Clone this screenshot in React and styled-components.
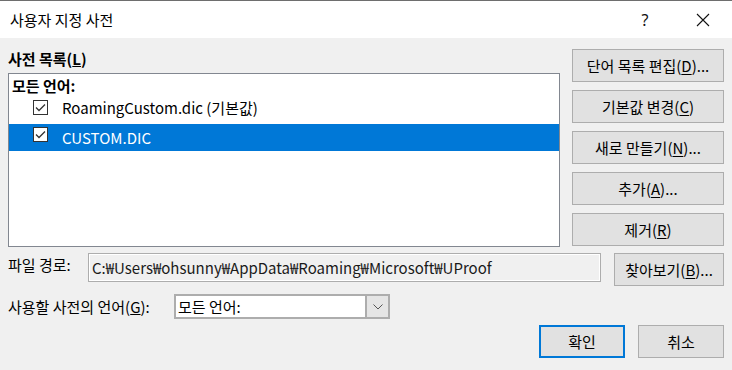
import React from 'react';
import styled, { createGlobalStyle } from 'styled-components';

const GlobalStyle = createGlobalStyle`
  html, body {
    margin: 0;
    padding: 0;
    background: #f0f0f0;
  }
  body {
    font-family: "Noto Sans CJK KR", "Noto Sans", sans-serif;
    font-size: 15px;
    color: #000;
  }
`;

const Dialog = styled.div`
  width: 732px;
  height: 370px;
  display: flex;
  flex-direction: column;
  background: #f0f0f0;
  overflow: hidden;
`;

/* Title bar */
const TitleBar = styled.div`
  height: 37px;
  display: flex;
  align-items: center;
  background: #fff;
  border-top: 1px solid #6e6e6e;
  padding-left: 10px;
`;

const Title = styled.div`
  flex: 1;
  font-size: 15px;
  line-height: 20px;
`;

const TitleButton = styled.div`
  width: 58px;
  height: 36px;
  display: flex;
  align-items: center;
  justify-content: center;
  font-family: "Noto Sans", sans-serif;
  font-size: 16px;
  color: #111;
`;

/* Body */
const Body = styled.div`
  flex: 1;
  display: flex;
  flex-direction: column;
  padding: 11px 8px 0 8px;
`;

const MainGrid = styled.div`
  display: grid;
  grid-template-columns: 1fr 152px;
  column-gap: 12px;
  height: 198px;
`;

const ListColumn = styled.div`
  display: flex;
  flex-direction: column;
`;

const SectionLabel = styled.div`
  height: 24px;
  line-height: 20px;
  font-weight: 700;
`;

const ListBox = styled.div`
  flex: 1;
  background: #fff;
  border: 1px solid #828790;
  display: flex;
  flex-direction: column;
`;

const ListHeader = styled.div`
  height: 23px;
  line-height: 24px;
  padding-left: 3px;
  font-weight: 700;
`;

const ListRow = styled.div`
  height: ${p => p.$h}px;
  box-sizing: border-box;
  padding-bottom: ${p => p.$pb || 0}px;
  display: flex;
  align-items: center;
  padding-left: 24px;
  background: ${p => (p.$selected ? '#0078d7' : 'transparent')};
  color: ${p => (p.$selected ? '#fff' : '#000')};
`;

const CheckBox = styled.span`
  width: 13px;
  height: 13px;
  border: 1px solid #333;
  background: #fff;
  display: flex;
  align-items: center;
  justify-content: center;
  margin-right: 14px;
  margin-top: ${p => p.$lift || 0}px;
`;

const ButtonStack = styled.div`
  display: flex;
  flex-direction: column;
  gap: 8px;
`;

const Button = styled.button`
  height: 33px;
  width: ${p => p.$w || '100%'};
  background: #e1e1e1;
  border: 1px solid #adadad;
  font-family: "Noto Sans CJK KR", "Noto Sans", sans-serif;
  font-size: 15px;
  color: #000;
  padding: 0;
  display: flex;
  align-items: center;
  justify-content: center;
  ${p => p.$default && `
    border: 2px solid #0078d7;
  `}

  u {
    text-decoration-thickness: 1px;
    text-underline-offset: 2px;
  }
`;

/* Path row */
const PathRow = styled.div`
  margin-top: 6px;
  display: flex;
  align-items: flex-start;
  height: 34px;
`;

const FieldLabel = styled.div`
  width: ${p => p.$w}px;
  line-height: 20px;
  padding-top: ${p => p.$top || 0}px;
  flex-shrink: 0;
`;

const PathBox = styled.div`
  flex: 1;
  height: 29px;
  box-sizing: border-box;
  border: 1px solid #adadad;
  box-shadow: inset 0 0 0 1px #fff;
  display: flex;
  align-items: center;
  padding-left: 3px;
  margin-right: 13px;
  white-space: nowrap;
  overflow: hidden;
  color: #1a1a1a;
`;

/* Language row */
const LangRow = styled.div`
  margin-top: 7px;
  display: flex;
  align-items: center;
  height: 25px;
`;

const Combo = styled.div`
  width: 216px;
  height: 25px;
  box-sizing: border-box;
  border: 2px solid #adadad;
  background: #fff;
  display: flex;
`;

const ComboText = styled.div`
  flex: 1;
  display: flex;
  align-items: center;
  padding-left: 2px;
`;

const ComboArrow = styled.div`
  width: 21px;
  background: #e5e5e5;
  border-left: 2px solid #adadad;
  display: flex;
  align-items: center;
  justify-content: center;
`;

/* Footer */
const Footer = styled.div`
  margin-top: 6px;
  display: flex;
  justify-content: flex-end;
  gap: 13px;
`;

function Check() {
  return (
    <svg width="11" height="9" viewBox="0 0 11 9">
      <path d="M1 4.5 L4 7.5 L10 1.5" fill="none" stroke="#333" strokeWidth="1.3" />
    </svg>
  );
}

export default function App() {
  return (
    <Dialog>
      <GlobalStyle />
      <TitleBar>
        <Title>사용자 지정 사전</Title>
        <TitleButton>?</TitleButton>
        <TitleButton>
          <svg width="14" height="14" viewBox="0 0 14 14">
            <path d="M1 1 L13 13 M13 1 L1 13" stroke="#111" strokeWidth="1.1" />
          </svg>
        </TitleButton>
      </TitleBar>
      <Body>
        <MainGrid>
          <ListColumn>
            <SectionLabel>사전 목록(<u>L</u>)</SectionLabel>
            <ListBox>
              <ListHeader>모든 언어:</ListHeader>
              <ListRow $h={27} $pb={7}>
                <CheckBox><Check /></CheckBox>
                RoamingCustom.dic (기본값)
              </ListRow>
              <ListRow $h={27} $selected>
                <CheckBox $lift={-6}><Check /></CheckBox>
                CUSTOM.DIC
              </ListRow>
            </ListBox>
          </ListColumn>
          <ButtonStack>
            <Button>단어 목록 편집(<u>D</u>)...</Button>
            <Button>기본값 변경(<u>C</u>)</Button>
            <Button>새로 만들기(<u>N</u>)...</Button>
            <Button>추가(<u>A</u>)...</Button>
            <Button>제거(<u>R</u>)</Button>
          </ButtonStack>
        </MainGrid>
        <PathRow>
          <FieldLabel $w={80} $top={2}>파일 경로:</FieldLabel>
          <PathBox>C:₩Users₩ohsunny₩AppData₩Roaming₩Microsoft₩UProof</PathBox>
          <Button $w="110px">찾아보기(<u>B</u>)...</Button>
        </PathRow>
        <LangRow>
          <FieldLabel $w={166}>사용할 사전의 언어(<u>G</u>):</FieldLabel>
          <Combo>
            <ComboText>모든 언어:</ComboText>
            <ComboArrow>
              <svg width="10" height="6" viewBox="0 0 10 6">
                <path d="M0.5 0.5 L5 5 L9.5 0.5" fill="none" stroke="#555" strokeWidth="1" />
              </svg>
            </ComboArrow>
          </Combo>
        </LangRow>
        <Footer>
          <Button $w="86px" $default>확인</Button>
          <Button $w="86px">취소</Button>
        </Footer>
      </Body>
    </Dialog>
  );
}
